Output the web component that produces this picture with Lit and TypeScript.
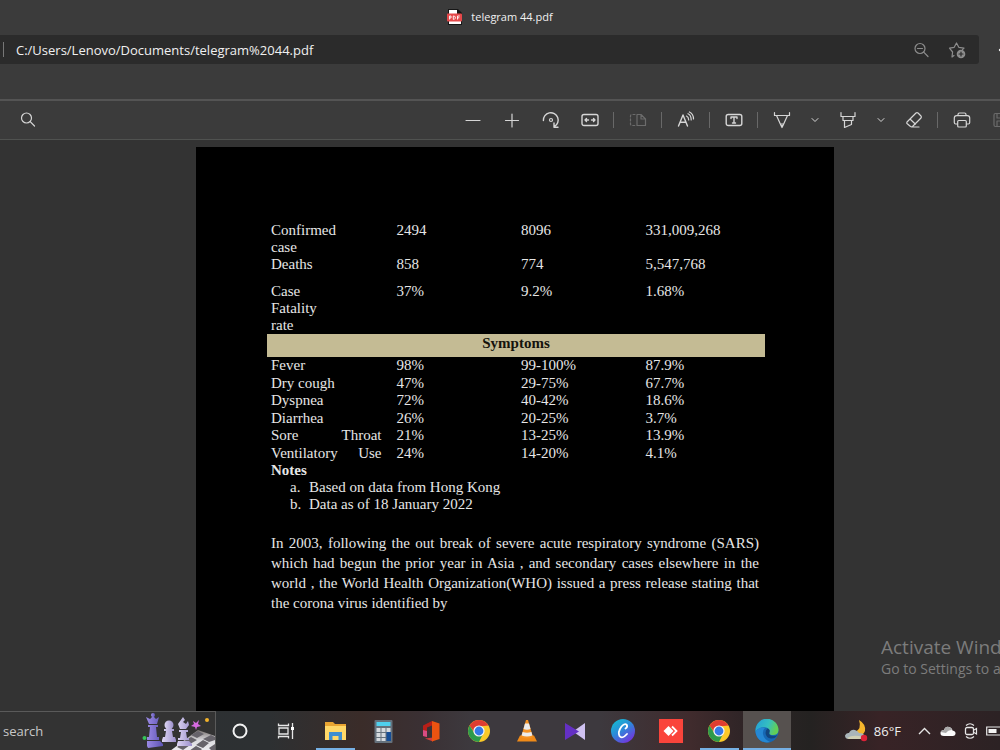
import { LitElement, html, css, svg, TemplateResult } from "lit";
import { customElement, property } from "lit/decorators.js";

const line = (body: unknown, size = 18) => html`<svg
  width=${size} height=${size} viewBox="0 0 ${size} ${size}" fill="none"
  stroke="currentColor" stroke-width="1.2" stroke-linecap="round" stroke-linejoin="round"
  aria-hidden="true">${body}</svg>`;

const art = (body: unknown, w = 24, h = 24) => html`<svg
  width=${w} height=${h} viewBox="0 0 ${w} ${h}" aria-hidden="true">${body}</svg>`;

const icons = {
  search: line(svg`<circle cx="7.500" cy="7" r="5"/><path d="M11.200 10.700L15.500 15"/>`),
  minus: line(svg`<path d="M2 9.500H16"/>`),
  plus: line(svg`<path d="M2.500 9.500H15.500M9 3V16"/>`),
  rotate: line(svg`<path d="M1.400 9.500A7.400 7.400 0 1 1 12.500 15.500M12 12V16.200H16" stroke-width="1.400"/><circle cx="9" cy="9" r="1.500"/>`),
  fit: line(svg`<rect x="1" y="3.500" width="16" height="11" rx="2" stroke-width="1.400"/><path d="M4 9H7.500M10.500 9H14M5.500 7.500L4 9L5.500 10.500M12.500 7.500L14 9L12.500 10.500" stroke-width="1.400"/>`),
  pages: line(svg`<path d="M8 3.500H12L16.500 8V14.500H8ZM12 3.500V8H16.500"/><path d="M6 3.500H3Q1.500 3.500 1.500 5V13Q1.500 14.500 3 14.500H6" stroke-dasharray="2 2"/>`),
  read: line(svg`<path d="M1.500 15L6 4L10.500 15M3 11.200H9" stroke-width="1.400"/><path d="M9.500 5Q11.700 6 11.700 9M11 2.700Q14.200 4.200 14.200 9M12.400 1Q16.500 3 16.500 8"/>`),
  text: line(svg`<rect x="1.200" y="3.500" width="15.600" height="11" rx="2" stroke-width="1.400"/><path d="M6 7.500V6H12V7.500M9 6V12M7.500 12H10.500" stroke-width="1.400"/>`),
  pen: line(svg`<path d="M1.500 1.500V4.500H16.500V1.500M3.500 4.500L8 14.500H10L14.500 4.500M8 14.500L9 16.500L10 14.500M7.500 13H10.500"/>`),
  marker: line(svg`<path d="M2 1.500V5.500H16V1.500M4 5.500V9.500H14V5.500M5.500 9.500V16.500L12.500 13.500V9.500"/>`),
  eraser: line(svg`<path d="M2 11L11 2Q12 1.200 13 2L16 5Q16.800 6 16 7L7.500 15.500Q6.500 16.200 5.500 15.500L2 12.500Q1.400 11.800 2 11ZM5 8L10.500 13.200M6.500 16H14"/>`),
  print: line(svg`<path d="M5 4.500V3.500Q5 2 6.500 2H11.500Q13 2 13 3.500V4.500M4.500 13H2.700Q1.300 13 1.300 11.500V7Q1.300 4.700 3.700 4.700H14.300Q16.700 4.700 16.700 7V11.500Q16.700 13 15.300 13H13.500"/><rect x="4.700" y="9.500" width="8.600" height="6.500" rx="1"/>`),
  save: line(svg`<path d="M3.500 2.500H13L16 5.500V15.500H3.500Q2 15.500 2 14V4Q2 2.500 3.500 2.500ZM5 2.500V7H12V2.500M5 15.500V10H13V15.500"/>`),
  down: line(svg`<path d="M2 3.500L5 6.500L8 3.500" stroke-width="1"/>`, 10),
  zoomOut: line(svg`<circle cx="8" cy="7.500" r="5"/><path d="M5.500 7.500H10.500M11.700 11.200L16 15.500"/>`),
  star: line(svg`<path d="M6 14.500L4 16L4.600 11L1.500 7.200L6.200 6.300L8.500 2L10.800 6.300L16 7.200L14.500 8.700"/><circle cx="13" cy="13" r="4.300" fill="currentColor" stroke="none"/><path d="M13 11V15M11 13H15" stroke="#2b2b2b"/>`),
};

const chrome = art(svg`
  <circle cx="12" cy="12" r="11" fill="#fbc928"/>
  <path d="M2.500 6.500A11 11 0 0 1 21.500 6.500L12 7.500L8 14.300Z" fill="#df3d31"/>
  <path d="M2.500 6.500A11 11 0 0 0 12 23L16 15H8Z" fill="#2d9a4b"/>
  <circle cx="12" cy="12" r="5.600" fill="#f5f5f5"/><circle cx="12" cy="12" r="4.400" fill="#3479e6"/>`);

const apps: { name: string; icon: TemplateResult; state?: string }[] = [
  { name: "File Explorer", state: "open", icon: art(svg`
    <path d="M2 3H10L12 5H23V21H2Z" fill="#e9a532"/><path d="M2 7H23V21H2Z" fill="#ffd868"/>
    <path d="M6 21V13H19V21H15.500V17H9.500V21Z" fill="#3e8ed0"/>`) },
  { name: "Calculator", icon: art(svg`
    <rect x="3.500" y="1" width="18" height="23" rx="1" fill="#65717c"/>
    <rect x="5.500" y="3" width="14" height="4" fill="#4fd0ee"/>
    <path d="M5.500 9h4v4h-4zM10.500 9h4v4h-4zM15.500 9h4v4h-4zM5.500 14h4v4h-4zM10.500 14h4v4h-4zM5.500 19h4v3h-4zM10.500 19h4v3h-4z" fill="#d5dade"/>
    <path d="M15.500 13h4.500v9h-4.500z" fill="#164e96"/>`) },
  { name: "Office", icon: art(svg`
    <path d="M13 2L4 6.500V17L8 18V8.500L13 6.500Z" fill="#b81f18"/>
    <path d="M4 11V17L8 18V12Z" fill="#d84c83"/>
    <path d="M6 19.500L14 22.500L14 18.500Z" fill="#d13d3d"/>
    <path d="M13 2L20.500 4.500V20L13 22.500Z" fill="#eb5311"/>`) },
  { name: "Chrome", icon: chrome },
  { name: "VLC", icon: art(svg`
    <path d="M5 16.500H19L22 22.500H2Z" fill="#f08a18"/>
    <path d="M11 1H13L18 18Q12 21 6 18Z" fill="#f59324"/>
    <path d="M10 4.500H14L15.500 10Q12 11.300 8.500 10ZM7.600 13Q12 14.500 16.400 13L17.400 16.600Q12 18.500 6.600 16.600Z" fill="#ececec"/>`) },
  { name: "Visual Studio", icon: art(svg`
    <path d="M22 4V21L10 12.500Z" fill="#cfc1f1"/><path d="M2 4L16 12.500L2 21Z" fill="#6430c4"/>`) },
  { name: "Canva", icon: art(svg`
    <defs><linearGradient id="cv" x1="0" y1="0" x2=".7" y2="1"><stop offset="0" stop-color="#12c6cf"/><stop offset=".5" stop-color="#2a8bd9"/><stop offset="1" stop-color="#7433dd"/></linearGradient></defs>
    <circle cx="12" cy="12" r="12" fill="url(#cv)"/>
    <path d="M14.500 9.500Q17 8 15.700 5.700Q13.500 4 10.500 7.500Q6.500 13 8.500 17Q11 20.500 16 15" fill="none" stroke="#fff" stroke-width="1.800" stroke-linecap="round"/>`) },
  { name: "AnyDesk", icon: art(svg`
    <rect width="24" height="24" fill="#fa443b"/><path d="M9.500 7L14.500 12L9.500 17L4.500 12Z" fill="#fff"/>
    <path d="M13 7.500L17.500 12L13 16.500" fill="none" stroke="#fff" stroke-width="1.800"/>`) },
  { name: "Chrome window", state: "open", icon: chrome },
  { name: "Edge", state: "open active", icon: art(svg`
    <defs><linearGradient id="eg" x1="0" y1="0" x2="1" y2=".3"><stop offset="0" stop-color="#239ed8"/><stop offset=".6" stop-color="#35bfc0"/><stop offset="1" stop-color="#62cf55"/></linearGradient></defs>
    <circle cx="12" cy="12" r="11.500" fill="#1668b4"/>
    <path d="M.5 11A11.500 11.500 0 0 1 23.500 11.500Q23 16 18 16Q13.500 16 14.500 13Q15 9.500 11 8.500Q4 7.500 .5 13Z" fill="url(#eg)"/>
    <path d="M.5 13Q4 7 10 9Q7.500 11 8 15Q9 20.500 15 23A11.500 11.500 0 0 1 .5 13Z" fill="#2588d4"/>
    <path d="M14.500 13Q13 16.500 18 17Q21 17 22.500 16Q20 20 16 19.500Q11 19 10.500 14Q10.500 11 12.500 9.500Q15.500 10.500 14.500 13Z" fill="#12467f"/>`) },
];

const chess = art(svg`
  <defs>
    <linearGradient id="board" x1="0" y1="0" x2="0" y2="1"><stop offset="0" stop-color="#77706e"/><stop offset=".5" stop-color="#dcdce0"/><stop offset="1" stop-color="#ececf0"/></linearGradient>
    <linearGradient id="queen" x1="0" y1="0" x2="1" y2="0"><stop offset="0" stop-color="#9d8be6"/><stop offset="1" stop-color="#5d54b4"/></linearGradient>
    <linearGradient id="pale" x1="0" y1="0" x2="1" y2="0"><stop offset="0" stop-color="#ddd5f3"/><stop offset="1" stop-color="#9b8fcb"/></linearGradient>
  </defs>
  <path d="M28 39L56 18L73 24V39Z" fill="url(#board)"/>
  <path d="M49 23L56 19L62 22L55 26ZM61 27L69 23L73 25V28L67 30ZM42 29L49 25L55 28L48 32ZM54 33L61 28L67 31L61 36ZM35 35L42 30L48 33L41 38ZM47 39L54 34L60 37L58 39ZM67 36L73 32V39H70Z" fill="#66636a"/>
  <g fill="url(#queen)">
    <circle cx="11" cy="3" r="2"/>
    <path d="M4 5L8 7L11 4L14 7L17 5L15 12H7ZM6 13H16V15H6ZM8 15H14L15 25H7ZM5 25H17V28H5ZM5 29H18L21 32V34L6 36L5 34Z"/>
  </g>
  <g fill="url(#pale)">
    <circle cx="27" cy="13" r="4.500"/>
    <path d="M22 17H32V19H22ZM24 19H30L31 25H23ZM21 25H33L34 28V30H20V28Z"/>
    <path d="M41 5L43 8L41 10L44 12L46 9L47 13L44 17H38L36 12ZM37 18H46V20H37ZM39 20H44L45 26H38ZM36 26H47V28H36ZM36 29H47L50 32V34H35V32Z"/>
  </g>
  <path d="M51 9L54 11L57 8L56 12L59 14L55 15L54 18L53 15L49 14L52 12Z" fill="#d56be0"/>
  <circle cx="65" cy="8" r="2" fill="#f4b32a"/><circle cx="2.500" cy="26" r="2" fill="#35c458"/>`, 73, 39);

@customElement("pdf-toolbar")
export class PdfToolbar extends LitElement {
  static styles = css`
    :host { display: flex; height: 38px; overflow: hidden; background: #3b3b3b; color: #d6d6d6;
      border-top: 2px solid #545454; border-bottom: 1px solid #505250; flex: none; }
    button { display: grid; place-items: center; width: 39px; height: 38px; flex: none;
      padding: 0; border: 0; background: none; color: inherit; }
    .find { margin-left: 8px; }
    .tools { display: flex; align-items: center; margin-left: auto; margin-right: -20px; }
    .narrow { width: 27px; }
    .dim { color: #6b6b6b; }
    .sep { width: 1px; height: 16px; margin: 0 4px; background: #686868; flex: none; }
  `;
  private tool(label: string, icon: TemplateResult, cls = "") {
    return html`<button class=${cls} aria-label=${label}>${icon}</button>`;
  }
  render() {
    const sep = html`<span class="sep"></span>`;
    return html`
      ${this.tool("Find", icons.search, "find")}
      <div class="tools">
        ${this.tool("Zoom out", icons.minus)}${this.tool("Zoom in", icons.plus)}
        ${this.tool("Rotate", icons.rotate)}${this.tool("Fit to width", icons.fit)}${sep}
        ${this.tool("Page view", icons.pages, "dim")}${sep}
        ${this.tool("Read aloud", icons.read)}${sep}
        ${this.tool("Add text", icons.text)}${sep}
        ${this.tool("Draw", icons.pen)}${this.tool("Draw options", icons.down, "narrow")}
        ${this.tool("Highlight", icons.marker)}${this.tool("Highlight options", icons.down, "narrow")}
        ${this.tool("Erase", icons.eraser)}${sep}
        ${this.tool("Print", icons.print)}${this.tool("Save", icons.save, "dim")}
      </div>`;
  }
}

const cases = [
  { cells: ["Confirmed case", "2494", "8096", "331,009,268"], cls: "" },
  { cells: ["Deaths", "858", "774", "5,547,768"], cls: "roomy" },
  { cells: ["Case Fatality rate", "37%", "9.2%", "1.68%"], cls: "" },
];
const symptoms = [
  { cells: ["Fever", "98%", "99-100%", "87.9%"] },
  { cells: ["Dry cough", "47%", "29-75%", "67.7%"] },
  { cells: ["Dyspnea", "72%", "40-42%", "18.6%"] },
  { cells: ["Diarrhea", "26%", "20-25%", "3.7%"] },
  { cells: ["Sore Throat", "21%", "13-25%", "13.9%"], cls: "spread" },
  { cells: ["Ventilatory Use", "24%", "14-20%", "4.1%"], cls: "spread" },
];

@customElement("pdf-page")
export class PdfPage extends LitElement {
  static styles = css`
    :host { display: block; box-sizing: border-box; background: #000; color: #e6e6e6;
      padding: 75px 69px 75px 71px; font: 15px/17px "Liberation Serif", serif; }
    table { width: 100%; border-collapse: collapse; table-layout: fixed; }
    td, th { padding: 0 10px 0 5px; vertical-align: top; text-align: left; font-weight: normal; }
    .label { padding: 0 52px 0 4px; }
    .roomy { height: 27px; }
    .band { height: 23px; background: #c4bb94; color: #15130c; }
    .band th { padding: 1px 0 0; text-align: center; font-weight: bold; }
    .symptoms .label { padding-right: 10px; white-space: nowrap; }
    .symptoms tr:nth-child(even) { height: 18px; }
    .spread .label { text-align: justify; text-align-last: justify; }
    .text { padding: 0 6px 0 4px; }
    h2 { margin: 0; font-size: 15px; line-height: 17px; }
    ol { margin: 0; padding: 0; list-style: none; counter-reset: note; }
    li { display: flex; padding-left: 19px; counter-increment: note; }
    li::before { content: counter(note, lower-alpha) "."; width: 19px; flex: none; }
    p { margin: 20px 0 0; line-height: 20px; text-align: justify; }
  `;
  private row(r: { cells: string[]; cls?: string }) {
    const [label, ...values] = r.cells;
    return html`<tr class=${r.cls ?? ""}><th scope="row" class="label">${label}</th>${values.map((v) => html`<td>${v}</td>`)}</tr>`;
  }
  render() {
    return html`
      <table>
        <tbody>${cases.map((r) => this.row(r))}</tbody>
        <tbody class="symptoms">
          <tr class="band"><th colspan="4" scope="rowgroup">Symptoms</th></tr>
          ${symptoms.map((r) => this.row(r))}
        </tbody>
      </table>
      <div class="text">
        <h2>Notes</h2>
        <ol><li>Based on data from Hong Kong</li><li>Data as of 18 January 2022</li></ol>
        <p>In 2003, following the out break of severe acute respiratory syndrome (SARS)
        which had begun the prior year in Asia , and secondary cases elsewhere in the
        world , the World Health Organization(WHO) issued a press release stating that
        the corona virus identified by</p>
      </div>`;
  }
}

@customElement("task-bar")
export class TaskBar extends LitElement {
  static styles = css`
    :host { display: flex; height: 39px; flex: none; overflow: hidden; color: #eee;
      font: 13px/18px "Open Sans", sans-serif;
      background: linear-gradient(90deg, #2c3033 0%, #2d3032 27%, #3a2c29 36%, #3a3033 42%, #3d393e 47%, #3d393e 60%, #402b2d 69%, #302527 74%, #242221 81%, #382326 88%, #2c2224 100%); }
    button { display: grid; place-items: center; padding: 0; border: 0; background: none; color: inherit; flex: none; }
    .search { display: flex; box-sizing: border-box; width: 216px; flex: none;
      background: #333; border: solid #5a5a5a; border-width: 1px 1px 0 0; }
    .search input { flex: 1; min-width: 0; padding: 0 0 0 3px; border: 0; background: none;
      color: #ccc; font: 13px/18px "Open Sans", sans-serif; outline: 0; }
    .search input::placeholder { color: #c8c8c8; opacity: 1; }
    .system { width: 47px; }
    .app { width: 48px; height: 39px; box-sizing: border-box; }
    .apps { display: flex; margin-left: 1px; }
    .open { background: linear-gradient(#76b0e4, #76b0e4) center bottom / 39px 2px no-repeat; }
    .active { background: linear-gradient(#76b0e4, #76b0e4) center bottom / 48px 2px no-repeat, #56514f; }
    .tray { display: flex; align-items: center; margin-left: auto; margin-right: -5px; }
    .tray button { width: 23px; height: 39px; }
    .tray .weather { display: flex; align-items: center; gap: 6px; width: auto; margin-right: 12px; font: inherit; }
  `;
  @property({ attribute: false }) items = apps;
  render() {
    return html`
      <div class="search">
        <input aria-label="Search" placeholder="search" />${chess}
      </div>
      <button class="system" aria-label="Cortana">${art(svg`<circle cx="12" cy="12" r="6.500" fill="none" stroke="#f2f2f2" stroke-width="2"/>`)}</button>
      <button class="system" aria-label="Task view">${art(svg`<path d="M3.500 4.500V6.500H13.500V4.500M3.500 19.500V17.500H13.500V19.500M4 9H13V15H4ZM17.500 4V20" fill="none" stroke="#e6e6e6" stroke-width="1.300"/><rect x="16" y="8" width="3" height="3" fill="#fff"/>`)}</button>
      <div class="apps">
        ${this.items.map((a) => html`<button class="app ${a.state ?? ""}" aria-label=${a.name}>${a.icon}</button>`)}
      </div>
      <div class="tray">
        <button class="weather">
          ${art(svg`<path d="M15 1Q22 5 21 12Q19 17 14 17L11 13Q18 10 15 1Z" fill="#f5b52c"/>
            <path d="M5 20Q1 20 1 16.500Q2 13.500 5 14Q7 10 11 11Q14 12 15 14Q21 14 20 18Q19 20 16 20Z" fill="#a9b5b9"/><path d="M3 19Q9 15 19 18Q18 20 16 20H5Z" fill="#d0d0b4"/>
            <circle cx="20" cy="19" r="3.200" fill="#dc2238"/>`)}
          <span>86°F</span>
        </button>
        <button aria-label="Show hidden icons">${art(svg`<path d="M2 11L7.500 5.500L13 11" fill="none" stroke="#e6e6e6" stroke-width="1.400"/>`, 15, 16)}</button>
        <button aria-label="OneDrive">${art(svg`<path d="M4 13Q0 13 .5 9.500Q1 7 4 7Q5.500 3 9 4Q12 4.500 12.500 7.500Q16 8 15.500 11Q15 13 13 13Z" fill="#fafafa"/><path d="M.6 9Q1 7 4 7Q5.500 3 9 4Q11.500 4.500 12 7Q8 7 6 10Z" fill="#aaa"/>`, 16, 16)}</button>
        <button aria-label="Meet now">${art(svg`<path d="M3 2.500Q7 -1 11 2.500M3 13.500Q7 17 11 13.500M11 7L13.500 5.500V11L11 9.500" fill="none" stroke="#e6e6e6" stroke-width="1.200"/><rect x="2.500" y="4.500" width="8" height="7" rx="1.500" fill="none" stroke="#e6e6e6" stroke-width="1.300"/>`, 15, 16)}</button>
        <button aria-label="Battery">${art(svg`<path d="M2.700 4H19V12H2.700Z" fill="none" stroke="#e6e6e6" stroke-width="1.200"/><rect x="4.500" y="6" width="8" height="4" fill="#f4f4f4"/>`, 19, 16)}</button>
      </div>`;
  }
}

@customElement("app-root")
export class AppRoot extends LitElement {
  static styles = css`
    :host { display: flex; flex-direction: column; height: 100vh; overflow: hidden;
      background: #3b3b3b; font: 11px/18px "Open Sans", sans-serif; color: #f0f0f0; }
    button { display: grid; place-items: center; width: 36px; height: 29px; padding: 0;
      border: 0; background: none; color: #8c8c8c; flex: none; }
    .title { display: flex; align-items: center; justify-content: center; gap: 9px;
      height: 35px; padding-bottom: 2px; box-sizing: border-box; flex: none; font-weight: 500; }
    .nav { display: flex; flex: none; height: 29px; margin-bottom: 35px; overflow: hidden; }
    .address { display: flex; align-items: center; flex: 1; min-width: 0; padding-right: 4px;
      background: #2b2b2b; border-radius: 0 3px 3px 0; }
    .address::before { content: ""; width: 1px; height: 15px; margin: 0 12px 0 3px; background: #777; }
    .address input { flex: 1; min-width: 0; padding: 0; border: 0; background: none; outline: 0;
      color: #f0f0f0; font: 13px/18px "Open Sans", sans-serif; }
    .more { width: 21px; justify-items: end; color: #eee; }
    .viewer { position: relative; flex: 1; min-height: 0; overflow: hidden; background: #333;
      display: flex; justify-content: center; padding: 7px 0 0 30px; }
    pdf-page { flex: 0 1 638px; min-height: 100%; }
    .notice { position: absolute; right: 0; bottom: 32px; width: 119px; overflow: hidden;
      white-space: nowrap; color: #7c7c7c; font-size: 14px; line-height: 20px; }
    .notice strong { display: block; font-weight: normal; font-size: 19px; line-height: 24px; }
  `;
  render() {
    return html`
      <header class="title">
        ${art(svg`<path d="M1 0H11L15 4V16H1Z" fill="#161616"/><path d="M2 1H10V5H14V15H2Z" fill="#fff"/>
          <rect x="0" y="4.500" width="15" height="8" rx="1" fill="#e5484a"/>
          <path d="M2.500 10.500V7H4V9H2.500M6.300 7V10.300H7.300L8.300 9.300V8L7.300 7ZM10.500 10.500V7H12.700M10.500 8.800H12.300" fill="none" stroke="#fff" stroke-width=".9"/>`, 15, 16)}
        <span>telegram 44.pdf</span>
      </header>
      <div class="nav">
        <div class="address">
          <input aria-label="Address" value="C:/Users/Lenovo/Documents/telegram%2044.pdf" />
          <button aria-label="Zoom">${icons.zoomOut}</button>
          <button aria-label="Add to favorites">${icons.star}</button>
        </div>
        <button class="more" aria-label="More">${art(svg`<circle cx="2" cy="2" r="1.200" fill="#eee"/>`, 2, 4)}</button>
      </div>
      <pdf-toolbar></pdf-toolbar>
      <main class="viewer">
        <pdf-page></pdf-page>
        <aside class="notice"><strong>Activate Windows</strong>Go to Settings to activate Windows.</aside>
      </main>
      <task-bar></task-bar>`;
  }
}
